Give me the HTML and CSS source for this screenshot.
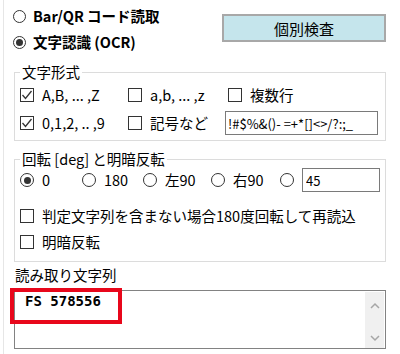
FILE: index.html
```html
<!DOCTYPE html>
<html lang="ja">
<head>
  <meta charset="UTF-8" />
  <title>読取設定</title>
  <link rel="stylesheet" href="styles.css">
</head>
<body>
  <div class="window">

    <!-- 読取モード -->
    <div class="top">
      <div class="modes">
        <label class="opt"><span class="radio"></span>Bar/QR コード読取</label>
        <label class="opt"><span class="radio on"></span>文字認識 (OCR)</label>
      </div>
      <button class="check-btn">個別検査</button>
    </div>

    <fieldset class="group">
      <legend>文字形式</legend>
      <div class="format-grid">
        <label class="opt"><span class="box on"><svg width="12" height="12" viewBox="0 0 12 12"><polyline points="1.5,6 4.5,9.5 10.5,2" fill="none" stroke="#333" stroke-width="1.3"/></svg></span>A,B, ... ,Z</label>
        <label class="opt"><span class="box"></span>a,b, ... ,z</label>
        <label class="opt shift"><span class="box"></span>複数行</label>
        <label class="opt"><span class="box on"><svg width="12" height="12" viewBox="0 0 12 12"><polyline points="1.5,6 4.5,9.5 10.5,2" fill="none" stroke="#333" stroke-width="1.3"/></svg></span>0,1,2, .. ,9</label>
        <label class="opt"><span class="box"></span>記号など</label>
        <input class="field symbols" type="text" value="!#$%&amp;()- =+*[]&lt;&gt;/?:;_" />
      </div>
    </fieldset>

    <fieldset class="group rotate">
      <legend>回転 [deg] と明暗反転</legend>
      <div class="angle-row">
        <label class="opt"><span class="radio big on"></span>0</label>
        <label class="opt"><span class="radio big"></span>180</label>
        <label class="opt"><span class="radio big"></span>左90</label>
        <label class="opt"><span class="radio big"></span>右90</label>
        <span class="radio big"></span>
        <input class="field angle" type="text" value="45" />
      </div>
      <label class="opt check-row"><span class="box"></span>判定文字列を含まない場合180度回転して再読込</label>
      <label class="opt check-row tight"><span class="box"></span>明暗反転</label>
    </fieldset>

    <div class="result-label">読み取り文字列</div>
    <div class="output">
      <div class="output-text">FS 578556</div>
      <div class="scrollbar">
        <svg width="10" height="7" viewBox="0 0 10 7"><polyline points="1,6 5,2 9,6" fill="none" stroke="#a6a6a6" stroke-width="1.5"/></svg>
        <svg width="10" height="7" viewBox="0 0 10 7"><polyline points="1,1 5,5 9,1" fill="none" stroke="#a6a6a6" stroke-width="1.5"/></svg>
      </div>
      <div class="mark"></div>
    </div>

  </div>
</body>
</html>
```

FILE: styles.css
```css
* {
  box-sizing: border-box;
}

body {
  margin: 0;
  background-color: #ffffff;
  color: #000000;
  font-family: "Noto Sans CJK JP", "Noto Sans", sans-serif;
  font-size: 14.5px;
}

.window {
  margin-left: 3px;
  border-left: 1px solid #e6e6e6;
  height: 354px;
  overflow: hidden;
}

/* 上段 */
.top {
  display: flex;
  justify-content: space-between;
  height: 63px;
  padding: 3px 14px 0 9px;
}

.modes {
  display: flex;
  flex-direction: column;
}

.opt {
  display: flex;
  align-items: center;
  gap: 8px;
  white-space: nowrap;
  line-height: 18px;
}

.modes .opt {
  height: 26px;
  gap: 7px;
  font-weight: 700;
}

.radio {
  width: 13px;
  height: 13px;
  border: 1px solid #333;
  border-radius: 50%;
  background-color: #fff;
  display: flex;
  align-items: center;
  justify-content: center;
  flex: none;
}

.radio.big {
  width: 14px;
  height: 14px;
}

.radio.on::after {
  content: "";
  width: 7px;
  height: 7px;
  border-radius: 50%;
  background-color: #333;
}

.box {
  width: 14px;
  height: 14px;
  border: 1px solid #333;
  background-color: #fff;
  display: flex;
  align-items: center;
  justify-content: center;
  flex: none;
}

.check-btn {
  width: 164px;
  height: 28px;
  margin-top: 11px;
  padding: 0;
  background-color: #c5e5ec;
  border: 2px solid #a8a8a8;
  font-family: inherit;
  font-size: 15px;
  color: #000;
}

/* グループ */
.group {
  margin: 0 14px 0 10px;
  padding: 0 5px 5px;
  border: 1px solid #dcdcdc;
  min-width: 0;
}

.group legend {
  padding: 0 2px;
  line-height: 18px;
}

.format-grid {
  display: grid;
  grid-template-columns: 108px 97px 1fr;
  grid-auto-rows: 24px;
  row-gap: 4px;
  padding-top: 2px;
  align-items: center;
}

.shift {
  margin-left: 3px;
}

.field {
  height: 24px;
  border: 1px solid #7a7a7a;
  padding: 0 2px;
  font-family: "Noto Sans CJK JP", "Noto Sans", sans-serif;
  font-size: 13px;
  color: #000;
  background-color: #fff;
}

.symbols {
  width: 153px;
}

.rotate {
  margin-top: 9px;
  padding-bottom: 7px;
}

.angle-row {
  display: grid;
  grid-template-columns: 62px 61px 68px 69px 22px 78px;
  height: 24px;
  align-items: center;
}

.angle {
  width: 78px;
  height: 24px;
  padding-left: 3px;
}

.check-row {
  height: 24px;
  margin-top: 12px;
}

.check-row.tight {
  margin-top: 2px;
}

/* 読み取り結果 */
.result-label {
  margin: 3px 0 0 11px;
  line-height: 20px;
}

.output {
  position: relative;
  display: flex;
  height: 59px;
  margin: 5px 14px 0 10px;
  border: 1px solid #828282;
}

.output-text {
  flex: 1;
  padding: 2px 0 0 10px;
  font-family: "DejaVu Sans Mono", monospace;
  font-weight: bold;
  font-size: 14px;
  line-height: 16px;
}

.scrollbar {
  width: 19px;
  margin: 1px 1px 0 0;
  background-color: #f0f0f0;
  display: flex;
  flex-direction: column;
  justify-content: space-between;
  align-items: center;
  padding: 10px 0 6px;
}

.mark {
  position: absolute;
  left: -5px;
  top: -3px;
  width: 112px;
  height: 36px;
  border: 4px solid #e8071b;
}
```
